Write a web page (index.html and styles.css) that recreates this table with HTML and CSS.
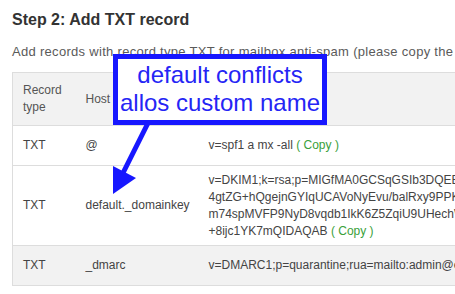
FILE: index.html
```html
<!DOCTYPE html>
<html>
<head>
<meta charset="utf-8">
<link rel="stylesheet" href="styles.css">
</head>
<body>
<div class="page">
  <h2 class="title">Step 2: Add TXT record</h2>
  <p class="intro">Add records with record type TXT for mailbox anti-spam (please copy the content below to your DNS settings)</p>
  <table class="records">
    <colgroup><col class="c1"><col class="c2"><col class="c3"></colgroup>
    <thead>
      <tr class="head"><th>Record type</th><th>Host</th><th>Value</th></tr>
    </thead>
    <tbody>
      <tr class="r1"><td>TXT</td><td>@</td><td>v=spf1 a mx -all <span class="copy">( Copy )</span></td></tr>
      <tr class="r2"><td>TXT</td><td>default._domainkey</td><td>v=DKIM1;k=rsa;p=MIGfMA0GCSqGSIb3DQEBAQUAA4GNADCBiQKBgQC7xW3<br>4gtZG+hQgejnGYIqUCAVoNyEvu/balRxy9PPKq2LmA0sQ1c5dRt8Z<br>m74spMVFP9NyD8vqdb1IkK6Z5ZqiU9UHechWq3rT6yAb0pNf2<br>+8ijc1YK7mQIDAQAB <span class="copy">( Copy )</span></td></tr>
      <tr class="r3"><td>TXT</td><td>_dmarc</td><td>v=DMARC1;p=quarantine;rua=mailto:admin@example.com <span class="copy">( Copy )</span></td></tr>
    </tbody>
  </table>
</div>
<div class="callout">default conflicts<br>allos custom name</div>
<svg class="arrow" width="455" height="294" viewBox="0 0 455 294">
  <line x1="148" y1="123" x2="123" y2="173" stroke="#1717ff" stroke-width="5"/>
  <polygon points="113,166 136,178 113,194" fill="#1717ff"/>
</svg>
</body>
</html>
```
FILE: styles.css
```css
html, body {
  margin: 0;
  padding: 0;
  width: 455px;
  height: 294px;
  overflow: hidden;
  background: #fff;
  font-family: "Liberation Sans", Arial, sans-serif;
}
.page {
  padding: 10px 0 0 12px;
}
.title {
  margin: 0;
  font-size: 16px;
  line-height: 20px;
  font-weight: bold;
  color: #333;
}
.intro {
  margin: 13px 0 11px 0;
  font-size: 13px;
  letter-spacing: 0.3px;
  line-height: 18px;
  color: #5a5a5a;
  white-space: nowrap;
}
.records {
  border-collapse: collapse;
  width: 800px;
  table-layout: fixed;
  border: 1px solid #dddddd;
  font-size: 12px;
  line-height: 17px;
  color: #444;
}
.c1 { width: 63px; }
.c2 { width: 123px; }
.records th, .records td {
  padding: 0 10px;
  text-align: left;
  vertical-align: middle;
  font-weight: normal;
  white-space: nowrap;
}
.records th:first-child {
  white-space: normal;
}
.records th {
  color: #555;
}
.head th {
  height: 52px;
  background: #f2f2f2;
}
.records tr {
  border-bottom: 1px solid #dddddd;
}
.r1 td { height: 39px; }
.r2 td { height: 79px; }
.r3 td { height: 39px; background: #f2f2f2; }
.copy {
  color: #3a9f3a;
}
.callout {
  position: absolute;
  left: 113px;
  top: 54px;
  width: 204px;
  height: 59px;
  border: 5px solid #1717ff;
  background: #fff;
  color: #2525f5;
  font-size: 24px;
  line-height: 28px;
  text-align: center;
  padding-top: 2px;
}
.arrow {
  position: absolute;
  left: 0;
  top: 0;
  pointer-events: none;
}
```
